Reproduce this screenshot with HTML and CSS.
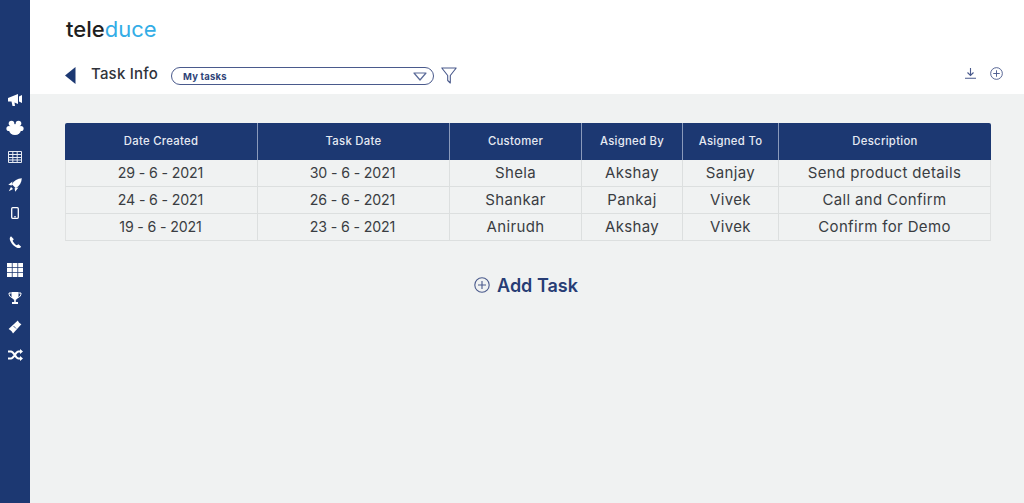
FILE: index.html
```html
<!DOCTYPE html>
<html lang="en">
<head>
<meta charset="utf-8">
<title>Task Info</title>
<link rel="stylesheet" href="styles.css">
</head>
<body>
<div class="app">
  <nav class="sidebar">
    <span class="nav-item"><svg width="16" height="14" viewBox="0 0 16 14"><path d="M1 5l10-4v10L7.500 9.600 8 13H5.500L4.500 8.600 1 8.500z" fill="#fff"/><path d="M12 3.500l3-1.500v8l-3-1.500z" fill="#fff"/></svg></span>
    <span class="nav-item"><svg width="18" height="16" viewBox="0 0 18 16" fill="#fff"><circle cx="5.500" cy="3.500" r="2.800"/><circle cx="12.500" cy="3.500" r="2.800"/><circle cx="3" cy="8.500" r="2.600"/><circle cx="15" cy="8.500" r="2.600"/><ellipse cx="9" cy="9.500" rx="6" ry="5.500"/></svg></span>
    <span class="nav-item"><svg width="14" height="12" viewBox="0 0 14 12"><path d="M.5.500h13v11H.5zM.5 3.500h13M.5 6.500h13M.5 9h13M4.800.5v11M9.200.5v11" fill="none" stroke="#e6eaf2" stroke-width="1"/></svg></span>
    <span class="nav-item"><svg width="14" height="14" viewBox="0 0 14 14" fill="#fff"><path d="M13.800.2C9.500.3 6 2.500 3.800 6.200L7.800 10.200C11.500 8 13.700 4.500 13.800.2z"/><path d="M4.500 3.500L.3 6.800l3.400.6zM10.500 9.500L7.200 13.700l-.6-3.400zM3 9l-2.200 4.200L5 11z"/></svg></span>
    <span class="nav-item"><svg width="8" height="12" viewBox="0 0 8 12"><rect x=".7" y=".7" width="6.600" height="10.600" rx="1" fill="none" stroke="#fff" stroke-width="1.300"/><path d="M3 9.800h2" stroke="#fff"/></svg></span>
    <span class="nav-item"><svg width="14" height="14" viewBox="0 0 14 14"><path d="M3 1.200C1.500 2.300 1.400 4 2.500 6.200c1.300 2.700 3.400 5 6 6.200 2 .9 3.800.7 4.700-.7L10.500 9.200 8.700 10.300C7 9.400 5.300 7.500 4.600 5.800L5.800 4.300z" fill="#fff"/></svg></span>
    <span class="nav-item"><svg width="16" height="14" viewBox="0 0 16 14" fill="#fff"><path d="M0 0h4.800v4.300H0zM5.600 0h4.800v4.300H5.600zM11.200 0H16v4.300h-4.800zM0 5h4.800v4H0zM5.600 5h4.800v4H5.600zM11.200 5H16v4h-4.800zM0 9.800h4.800V14H0zM5.600 9.800h4.800V14H5.600zM11.200 9.800H16V14h-4.800z"/></svg></span>
    <span class="nav-item"><svg width="14" height="14" viewBox="0 0 14 14"><path d="M3.500 1h7v3.500C10.500 7 9 8.500 7.800 8.700V11H10v2H4v-2h2.200V8.700C5 8.500 3.500 7 3.500 4.500z" fill="#fff"/><path d="M3.500 2H1c0 2.500 1 4 3 4.500M10.500 2H13c0 2.500-1 4-3 4.500" fill="none" stroke="#fff"/></svg></span>
    <span class="nav-item"><svg width="14" height="14" viewBox="0 0 14 14"><path d="M9.800.6L10.800 2.200 11.800 3.200 13.400 4.200 5 13.400 3.800 11.600 2.400 10.200.6 9z" fill="#fff"/><path d="M5.500 6L8 8.500" stroke="#1c3872" stroke-width=".8"/></svg></span>
    <span class="nav-item"><svg width="15" height="12" viewBox="0 0 15 12"><path d="M0 2.500h3c3 0 4.500 7 7.500 7H12.500M0 9.500h3c3 0 4.500-7 7.500-7H12.500" fill="none" stroke="#fff" stroke-width="2.200"/><path d="M12 0l3 2.500L12 5zM12 7l3 2.500L12 12z" fill="#fff"/></svg></span>
  </nav>
  <div class="content">
    <header class="top">
      <div class="logo"><span class="logo-dark">tele</span><span class="logo-light">duce</span></div>
      <div class="toolbar">
        <svg class="back" width="11" height="17" viewBox="0 0 11 17"><path d="M10.500 0v17L0 8.500z" fill="#1c3872"/></svg>
        <h1 class="title">Task Info</h1>
        <div class="select">
          <span class="select-text">My tasks</span>
          <svg width="14" height="9" viewBox="0 0 14 9"><path d="M1 1h12L7 8z" fill="none" stroke="#5a6a98" stroke-width="1.200" stroke-linejoin="round"/></svg>
        </div>
        <svg class="filter" width="16" height="17" viewBox="0 0 16 17"><path d="M.8 1h14.400L9.300 8.500V16L6.700 13.500v-5z" fill="none" stroke="#4a5a8c" stroke-width="1.100" stroke-linejoin="round"/></svg>
        <div class="actions">
          <svg width="11" height="11" viewBox="0 0 11 11"><path d="M5.500 0v7M2.500 4.500l3 3 3-3M0 10.300h11" fill="none" stroke="#4a5a8c" stroke-width="1.100"/></svg>
          <svg width="13" height="13" viewBox="0 0 14 14"><circle cx="7" cy="7" r="6.300" fill="none" stroke="#4a5a8c" stroke-width="1"/><path d="M3.500 7h7M7 3.500v7" stroke="#4a5a8c" stroke-width="1"/></svg>
        </div>
      </div>
    </header>
    <main class="main">
      <table class="tasks">
        <colgroup>
          <col class="c1"><col class="c2"><col class="c3"><col class="c4"><col class="c5"><col class="c6">
        </colgroup>
        <thead>
          <tr><th>Date Created</th><th>Task Date</th><th>Customer</th><th>Asigned By</th><th>Asigned To</th><th>Description</th></tr>
        </thead>
        <tbody>
          <tr><td class="date">29 - 6 - 2021</td><td class="date">30 - 6 - 2021</td><td>Shela</td><td>Akshay</td><td>Sanjay</td><td>Send product details</td></tr>
          <tr><td class="date">24 - 6 - 2021</td><td class="date">26 - 6 - 2021</td><td>Shankar</td><td>Pankaj</td><td>Vivek</td><td>Call and Confirm</td></tr>
          <tr><td class="date">19 - 6 - 2021</td><td class="date">23 - 6 - 2021</td><td>Anirudh</td><td>Akshay</td><td>Vivek</td><td>Confirm for Demo</td></tr>
        </tbody>
      </table>
      <div class="add-task">
        <svg width="16" height="16" viewBox="0 0 16 16"><circle cx="8" cy="8" r="7.200" fill="none" stroke="#4a5a8c" stroke-width="1.100"/><path d="M4 8h8M8 4v8" stroke="#4a5a8c" stroke-width="1.100"/></svg>
        <span>Add Task</span>
      </div>
    </main>
  </div>
</div>
</body>
</html>
```
FILE: styles.css
```css
* { box-sizing: border-box; }
html, body { margin: 0; height: 100%; }
body { font-family: Inter, "Open Sans", sans-serif; background: #fff; color: #3a3d42; overflow: hidden; }
.app { display: flex; height: 503px; }
.sidebar { width: 30px; flex: none; background: #1c3872; padding-top: 86px; display: flex; flex-direction: column; }
.nav-item { height: 28.3px; display: flex; align-items: center; justify-content: center; }
.content { flex: 1; display: flex; flex-direction: column; min-width: 0; }
.top { height: 94px; flex: none; background: #fff; padding: 16px 20px 0 35px; }
.logo { font-size: 22px; line-height: 26px; padding-left: 1px; }
.logo-dark { color: #1e1e20; font-weight: 500; }
.logo-light { color: #33ade6; font-weight: 400; }
.toolbar { display: flex; align-items: center; margin-top: 23px; height: 20px; }
.back { margin-right: 15px; }
.title { margin: 0 0 2px; font-size: 15px; line-height: 20px; font-weight: 500; letter-spacing: .2px; color: #30333a; width: 80px; white-space: nowrap; }
.select { width: 263px; height: 18px; margin-top: 2px; border: 1.200px solid #4a5a8c; border-radius: 9px; display: flex; align-items: center; justify-content: space-between; padding: 0 6px 0 11px; background: #fff; }
.select-text { font-size: 9.500px; font-weight: 700; letter-spacing: .2px; color: #2f4478; }
.filter { margin-left: 7px; }
.actions { display: flex; align-items: center; gap: 14px; margin: -3px 1px 0 auto; }
.main { flex: 1; background: #f0f2f2; padding: 29px 33px 0 35px; }
.tasks { width: 926px; table-layout: fixed; border-collapse: separate; border-spacing: 0; }
.c1, .c2 { width: 192px; }
.c3 { width: 132px; }
.c4 { width: 101px; }
.c5 { width: 96px; }
.c6 { width: 213px; }
.tasks th { height: 37px; padding: 0 0 1px; background: #1c3872; color: #e6eaf2; font-size: 11.300px; font-weight: 500; letter-spacing: .3px; border-left: 1px solid #8a9abb; text-align: center; }
.tasks th:first-child { border-left: 0; border-top-left-radius: 2px; }
.tasks th:last-child { border-top-right-radius: 2px; }
.tasks td { height: 27px; padding: 0 0 1px; font-size: 15px; letter-spacing: .35px; color: #3a3d42; text-align: center; border-left: 1px solid #dcdfdf; border-bottom: 1px solid #dcdfdf; white-space: nowrap; }
.tasks td.date { font-size: 14.200px; letter-spacing: -.15px; padding-right: 2px; }
.tasks td:first-child { border-left: 1px solid #e0e2e2; }
.tasks td:last-child { border-right: 1px solid #e0e2e2; }
.add-task { display: flex; align-items: center; justify-content: center; gap: 7px; margin-top: 32px; padding-right: 4px; height: 24px; font-size: 18px; font-weight: 600; color: #273d75; }
```
